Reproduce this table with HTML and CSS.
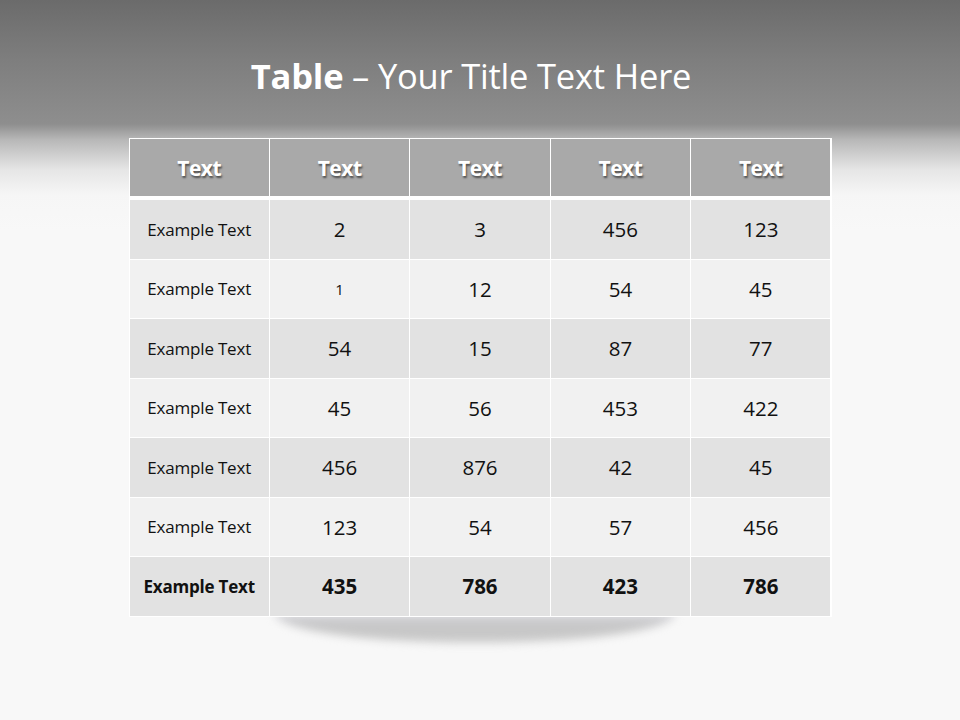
FILE: index.html
```html
<!DOCTYPE html>
<html>
<head>
<meta charset="utf-8">
<link rel="stylesheet" href="styles.css">
</head>
<body>
<div class="slide">
  <header class="title-band">
    <h1 class="title"><b>Table</b> – Your Title Text Here</h1>
  </header>
  <div class="table-wrap">
    <div class="table">
      <div class="row head">
        <div class="cell">Text</div><div class="cell">Text</div><div class="cell">Text</div><div class="cell">Text</div><div class="cell">Text</div>
      </div>
      <div class="body">
        <div class="row dark"><div class="cell label">Example Text</div><div class="cell">2</div><div class="cell">3</div><div class="cell">456</div><div class="cell">123</div></div>
        <div class="row light"><div class="cell label">Example Text</div><div class="cell small">1</div><div class="cell">12</div><div class="cell">54</div><div class="cell">45</div></div>
        <div class="row dark"><div class="cell label">Example Text</div><div class="cell">54</div><div class="cell">15</div><div class="cell">87</div><div class="cell">77</div></div>
        <div class="row light"><div class="cell label">Example Text</div><div class="cell">45</div><div class="cell">56</div><div class="cell">453</div><div class="cell">422</div></div>
        <div class="row dark"><div class="cell label">Example Text</div><div class="cell">456</div><div class="cell">876</div><div class="cell">42</div><div class="cell">45</div></div>
        <div class="row light"><div class="cell label">Example Text</div><div class="cell">123</div><div class="cell">54</div><div class="cell">57</div><div class="cell">456</div></div>
        <div class="row dark total"><div class="cell label">Example Text</div><div class="cell">435</div><div class="cell">786</div><div class="cell">423</div><div class="cell">786</div></div>
      </div>
    </div>
    <div class="shadow"></div>
  </div>
</div>
</body>
</html>
```

FILE: styles.css
```css
* { box-sizing: border-box; }
html, body { margin: 0; padding: 0; }
body { background: #f8f8f8; }
.slide {
  width: 960px;
  height: 720px;
  overflow: hidden;
  background: linear-gradient(to bottom, #6b6b6b 0px, #7e7e7e 60px, #8e8e8e 124px, #b8b8b8 140px, #e6e6e6 170px, #f6f6f6 195px, #f8f8f8 230px, #f8f8f8 720px);
  font-family: "Open Sans", "Liberation Sans", sans-serif;
}
.title-band {
  height: 138px;
  display: flex;
  justify-content: center;
  padding-top: 52px;
  padding-right: 18px;
}
.title {
  margin: 0;
  font-size: 34.5px;
  font-weight: 400;
  color: #ffffff;
  line-height: 48px;
  height: 48px;
  letter-spacing: -0.2px;
}
.title b { font-weight: 700; }
.table-wrap {
  width: 703px;
  margin: 0 auto;
  position: relative;
}
.table {
  position: relative;
  z-index: 1;
  background: #ffffff;
  padding: 1px;
  display: flex;
  flex-direction: column;
  gap: 4px;
}
.row {
  display: grid;
  grid-template-columns: repeat(5, 1fr);
  column-gap: 1px;
}
.head { height: 57px; }
.head .cell {
  background: #a9a9a9;
  color: #ffffff;
  font-weight: 700;
  font-size: 21px;
  text-shadow: 1px 2px 2px rgba(0,0,0,0.55);
  letter-spacing: -0.5px;
}
.body {
  display: flex;
  flex-direction: column;
  gap: 1px;
}
.body .row { height: 58.5px; }
.cell {
  display: flex;
  align-items: center;
  justify-content: center;
  color: #111111;
  font-size: 20.5px;
}
.dark .cell { background: #e2e2e2; }
.light .cell { background: #f1f1f1; }
.cell.label { font-size: 17px; letter-spacing: -0.2px; }
.cell.small { font-size: 15px; }
.total .cell { font-weight: 700; }
.shadow {
  position: absolute;
  left: 145px;
  top: calc(100% - 4px);
  width: 402px;
  height: 30px;
  border-radius: 0 0 50% 50% / 0 0 100% 100%;
  background: linear-gradient(to bottom, #dcdce2 0px, #cacacc 8px, #c6c6c6 20px, #cfcfcf 30px);
  filter: blur(4px);
  z-index: 0;
}
```
